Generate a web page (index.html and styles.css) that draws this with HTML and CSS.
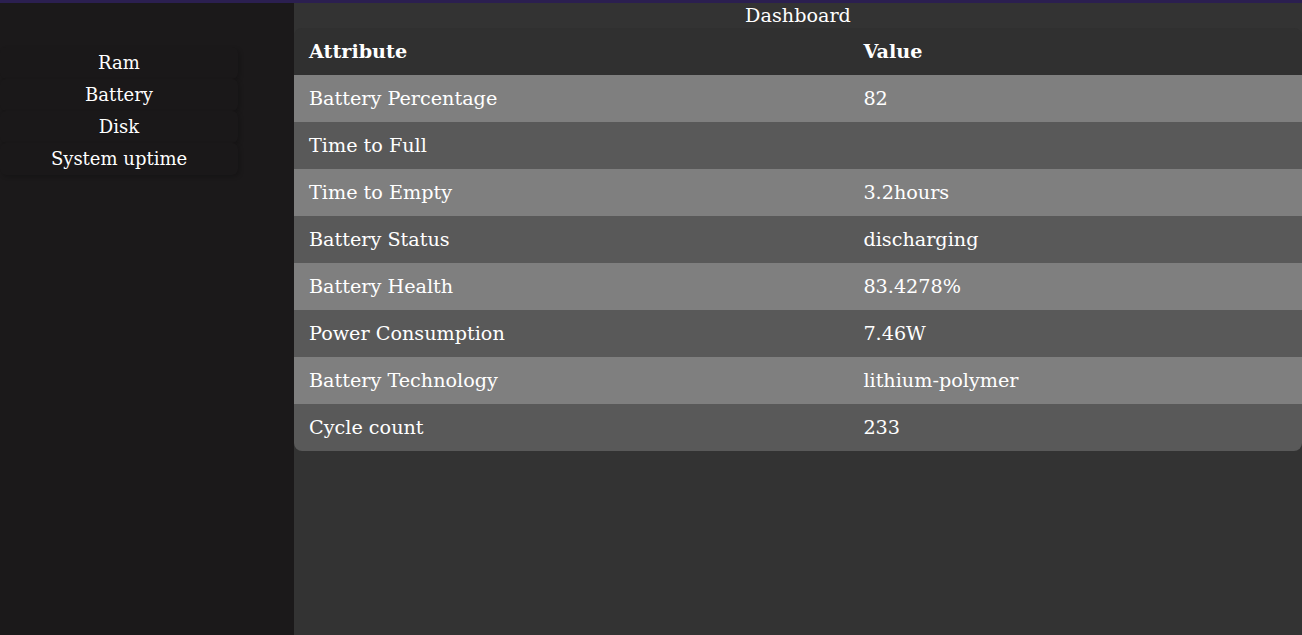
FILE: index.html
```html
<!DOCTYPE html>
<html>
<head>
<meta charset="utf-8">
<link rel="stylesheet" href="styles.css">
</head>
<body>
<div class="topbar"></div>
<div class="layout">
  <nav class="sidebar">
    <div class="nav-item">Ram</div>
    <div class="nav-item">Battery</div>
    <div class="nav-item">Disk</div>
    <div class="nav-item">System uptime</div>
  </nav>
  <main class="main">
    <div class="title">Dashboard</div>
    <table class="table">
      <thead>
        <tr><th class="col-attr">Attribute</th><th>Value</th></tr>
      </thead>
      <tbody>
        <tr><td>Battery Percentage</td><td>82</td></tr>
        <tr><td>Time to Full</td><td></td></tr>
        <tr><td>Time to Empty</td><td>3.2hours</td></tr>
        <tr><td>Battery Status</td><td>discharging</td></tr>
        <tr><td>Battery Health</td><td>83.4278%</td></tr>
        <tr><td>Power Consumption</td><td>7.46W</td></tr>
        <tr><td>Battery Technology</td><td>lithium-polymer</td></tr>
        <tr><td>Cycle count</td><td>233</td></tr>
      </tbody>
    </table>
  </main>
</div>
</body>
</html>
```
FILE: styles.css
```css
html, body {
  margin: 0;
  padding: 0;
  height: 100%;
  overflow: hidden;
}
body {
  font-family: "DejaVu Serif", serif;
  font-size: 16px;
  color: #fff;
  background: #333;
  display: flex;
  flex-direction: column;
}
.topbar {
  height: 3px;
  background: #2b1f50;
  flex: none;
}
.layout {
  flex: 1;
  display: flex;
}
.sidebar {
  width: 294px;
  flex: none;
  background: #1b191a;
  padding-top: 44px;
  box-sizing: border-box;
  font-size: 18px;
}
.nav-item {
  width: 238px;
  height: 32px;
  line-height: 32px;
  text-align: center;
  border-radius: 6px;
  background: #1a1819;
  box-shadow: 2px 2px 4px rgba(0,0,0,0.2);
}
.main {
  flex: 1;
  background: #333;
  font-size: 19.2px;
}
.title {
  text-align: center;
  height: 25px;
  line-height: 26px;
}
.table {
  width: 100%;
  border-collapse: separate;
  border-spacing: 0;
  border-radius: 8px;
  overflow: hidden;
  background: #303030;
}
.table th, .table td {
  text-align: left;
  padding: 12px 15px;
  height: 23px;
  line-height: 23px;
}
.table th {
  font-weight: bold;
}
.col-attr {
  width: 55%;
}
.table tbody tr:nth-child(odd) {
  background: #7f7f7f;
}
.table tbody tr:nth-child(even) {
  background: #595959;
}
```
